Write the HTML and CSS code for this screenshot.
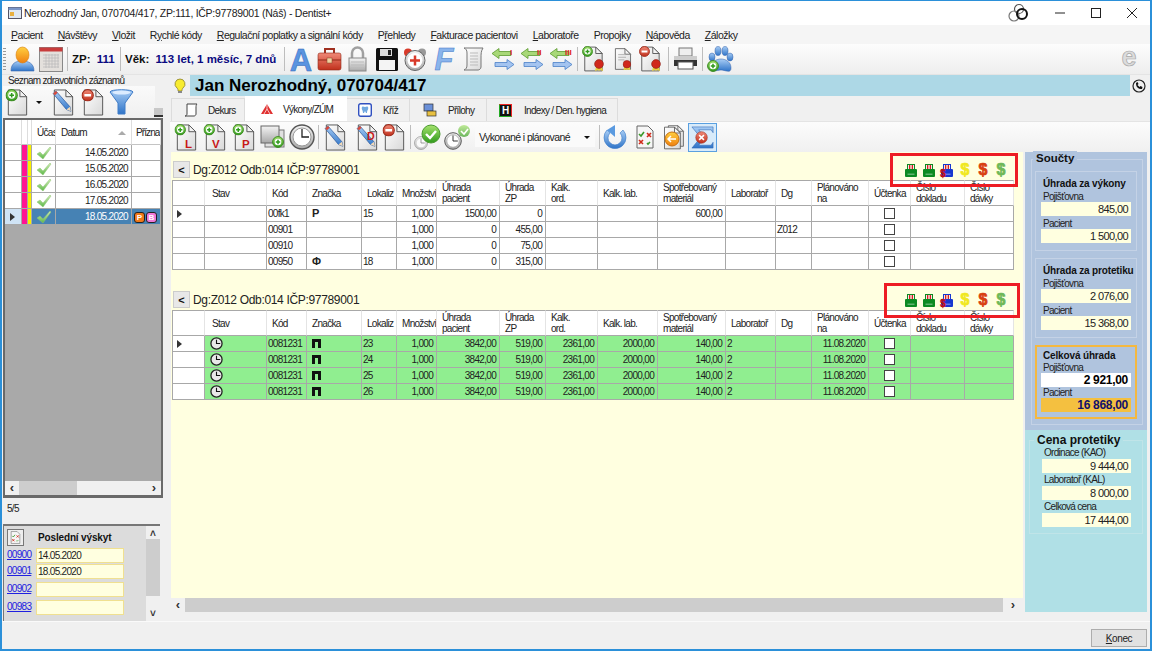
FILE: index.html
```html
<!DOCTYPE html>
<html lang="cs">
<head>
<meta charset="utf-8">
<title>Dentist+</title>
<link rel="stylesheet" href="styles.css">
</head>
<body>
<svg class="defs" aria-hidden="true">
<defs>
<linearGradient id="gPage" x1="0" y1="0" x2="1" y2="1"><stop offset="0" stop-color="#fff"/><stop offset="1" stop-color="#d8d8d8"/></linearGradient>
<linearGradient id="gGreen" x1="0" y1="0" x2="0" y2="1"><stop offset="0" stop-color="#a6e36e"/><stop offset="1" stop-color="#2f9a1c"/></linearGradient>
<linearGradient id="gTick" x1="0" y1="0" x2="0" y2="1"><stop offset="0" stop-color="#d4f0b8"/><stop offset="1" stop-color="#5cb848"/></linearGradient>
<linearGradient id="gRed" x1="0" y1="0" x2="0" y2="1"><stop offset="0" stop-color="#f08a78"/><stop offset="1" stop-color="#c0301c"/></linearGradient>
<linearGradient id="gBlue" x1="0" y1="0" x2="0" y2="1"><stop offset="0" stop-color="#a8cdf5"/><stop offset="1" stop-color="#2f74c8"/></linearGradient>
<linearGradient id="gOrange" x1="0" y1="0" x2="0" y2="1"><stop offset="0" stop-color="#ffd040"/><stop offset="1" stop-color="#f08010"/></linearGradient>
<linearGradient id="gGrey" x1="0" y1="0" x2="0" y2="1"><stop offset="0" stop-color="#f4f4f4"/><stop offset="1" stop-color="#a8a8a8"/></linearGradient>
</defs>
<symbol id="doc" viewBox="0 0 24 28"><path d="M3 1h12l7 7v19H3z" fill="url(#gPage)" stroke="#555"/><path d="M15 1v7h7z" fill="#f4f4f4" stroke="#555"/></symbol>
<symbol id="plus" viewBox="0 0 12 12"><circle cx="6" cy="6" r="5.4" fill="url(#gGreen)" stroke="#3b8a20"/><circle cx="6" cy="6" r="3.3" fill="#fff"/><path d="M3.8 6h4.4M6 3.8v4.400" stroke="#2f9a1c" stroke-width="1.500"/></symbol>
<symbol id="minus" viewBox="0 0 12 12"><circle cx="6" cy="6" r="5.4" fill="url(#gRed)" stroke="#a02a1a"/><path d="M2.8 6h6.4" stroke="#fff" stroke-width="2.200"/></symbol>
<symbol id="pencil" viewBox="0 0 24 28"><path d="M2 5l3-3 16 18 1 5-5-2z" fill="url(#gBlue)" stroke="#28579c" stroke-width=".8"/><path d="M2 5l3-3 2 2-3 3z" fill="#d84a3a"/><path d="M21 20l1 5-5-2z" fill="#f0d8b8"/></symbol>
<symbol id="seal" viewBox="0 0 10 12"><path d="M2 8l-1 4 3-1 1 1 1-1 3 1-1-4z" fill="#e8d040"/><circle cx="5" cy="5" r="4.4" fill="#d0281c" stroke="#8a1a10" stroke-width=".6"/></symbol>
<symbol id="bigclock" viewBox="0 0 26 26"><circle cx="13" cy="13" r="12" fill="url(#gGrey)" stroke="#555" stroke-width="1.400"/><circle cx="13" cy="13" r="9" fill="#fff" stroke="#999"/><path d="M13 5v8h7" fill="none" stroke="#222" stroke-width="1.300"/></symbol>
<symbol id="tick" viewBox="0 0 16 14"><path d="M1 8l3-2 3 3 7-8 1 1-8 11z" fill="url(#gTick)" stroke="#8cc070" stroke-width=".5"/></symbol>
<symbol id="tclock" viewBox="0 0 14 14"><circle cx="7" cy="7" r="6" fill="#e8e8e8" stroke="#222" stroke-width="1.400"/><path d="M7 3v4h4" fill="none" stroke="#111" stroke-width="1.200"/></symbol>
<symbol id="arrows" viewBox="0 0 24 26"><path d="M1 7l7-5v3h12v4H8v3z" fill="#a8d878" stroke="#5c9a30" stroke-width=".8"/><path d="M23 18l-7-5v3H4v4h12v3z" fill="#a4c4f0" stroke="#4a80c8" stroke-width=".8"/></symbol>
<symbol id="prn" viewBox="0 0 12 13"><rect x="2.500" y=".5" width="7" height="5" fill="#fbe8e8" stroke="currentColor"/><path d="M4 1h1.300v4H4zM6.700 1H8v4H6.700z" fill="#d82020"/><path d="M1 5h10a1 1 0 0 1 1 1v6a1 1 0 0 1-1 1H1a1 1 0 0 1-1-1V6a1 1 0 0 1 1-1z" fill="currentColor"/><rect x="2.500" y="9.500" width="7" height="1.500" fill="#fff" opacity=".35"/></symbol>
<symbol id="gridx" viewBox="0 0 20 24"><path d="M2 1h11l5 5v17H2z" fill="#f6f6f6" stroke="#666"/><path d="M4 9l2 2 3-4M15 17l-2 2-1-1" fill="none" stroke="#3a9a2a" stroke-width="1.600"/><path d="M12 8l4 4M16 8l-4 4M4 15l4 4M8 15l-4 4" stroke="#d02a1a" stroke-width="1.600"/></symbol>
</svg>

<div class="window">
  <header class="titlebar">
    <svg class="appicon" viewBox="0 0 14 12"><rect x=".5" y=".5" width="13" height="11" fill="#dfe8f2" stroke="#556"/><rect x=".5" y=".5" width="13" height="2.500" fill="#7a96c8"/><rect x="2" y="5" width="4" height="4" fill="#e8b040"/></svg>
    <span class="wintitle">Nerozhodný Jan, 070704/417, ZP:111, IČP:97789001 (Náš) - Dentist+</span>
    <svg class="rings" viewBox="0 0 22 20"><circle cx="11" cy="6" r="4.500" fill="none" stroke="#555" stroke-width="1.200"/><circle cx="6" cy="13" r="5" fill="none" stroke="#777" stroke-width="1.200"/><circle cx="14" cy="11" r="5" fill="none" stroke="#111" stroke-width="2"/></svg>
    <span class="winbtn"><svg viewBox="0 0 10 10"><path d="M0 5h10" stroke="#222"/></svg></span>
    <span class="winbtn"><svg viewBox="0 0 10 10"><rect x=".5" y=".5" width="9" height="9" fill="none" stroke="#222"/></svg></span>
    <span class="winbtn"><svg viewBox="0 0 10 10"><path d="M0 0l10 10M10 0L0 10" stroke="#222"/></svg></span>
  </header>

  <nav class="menubar">
    <span><u>P</u>acient</span><span><u>N</u>ávštěvy</span><span><u>V</u>ložit</span><span>R<u>y</u>chlé kódy</span><span><u>R</u>egulační poplatky a signální kódy</span><span>P<u>ř</u>ehledy</span><span><u>F</u>akturace pacientovi</span><span><u>L</u>aboratoře</span><span>Propo<u>j</u>ky</span><span><u>N</u>ápověda</span><span><u>Z</u>áložky</span>
  </nav>

  <div class="toolbar">
    <span class="grip"></span>
    <svg class="w25" viewBox="0 0 25 26"><path d="M1 25c0-8 5-10 11-10s12 2 12 10z" fill="url(#gBlue)" stroke="#3a6ab0" stroke-width=".6"/><ellipse cx="12.500" cy="9" rx="6.500" ry="8" fill="url(#gOrange)" stroke="#d88010" stroke-width=".6"/></svg>
    <svg class="w24" viewBox="0 0 24 25"><rect x=".5" y=".5" width="23" height="24" fill="#e4e0dc" stroke="#888"/><rect x=".5" y=".5" width="23" height="4" fill="#c83c3c"/><path d="M4 8h16M4 11h16M4 14h16M4 17h16M4 20h16M7 7v14M10 7v14M13 7v14M16 7v14M19 7v14" stroke="#bbb" stroke-width=".8"/></svg>
    <span class="sep"></span>
    <span class="info i1"><b>ZP:</b> <b class="navy">111</b></span>
    <span class="sep"></span>
    <span class="info i2"><b>Věk:</b> <b class="navy">113 let, 1 měsíc, 7 dnů</b></span>
    <span class="sep"></span>
    <svg class="w24" viewBox="0 0 24 26"><text class="glyph" x="12" y="24" text-anchor="middle" font-size="31" fill="#5a94e0" stroke="#2f68b8" stroke-width=".5">A</text></svg>
    <svg class="w25" viewBox="0 0 25 26"><path d="M8 7V3h9v4" fill="none" stroke="#a03020" stroke-width="2"/><rect x="1" y="7" width="23" height="17" rx="2" fill="url(#gRed)" stroke="#902818" stroke-width=".6"/><path d="M1 14h23" stroke="#902818"/><rect x="10" y="12" width="5" height="5" fill="#f0d0a0" stroke="#804020" stroke-width=".5"/></svg>
    <svg class="w19 m2" viewBox="0 0 19 26"><path d="M4 12V7a5.500 5.500 0 0 1 11 0v5" fill="none" stroke="#a0a0a0" stroke-width="2.500"/><rect x="1" y="12" width="17" height="13" fill="url(#gGrey)" stroke="#888"/><path d="M3 16h13M3 19h13M3 22h13" stroke="#bbb"/></svg>
    <svg class="w24 m4" viewBox="0 0 24 25"><rect x="1" y="1" width="22" height="23" rx="1.500" fill="#111"/><rect x="5" y="2" width="12" height="7" fill="#ddd"/><rect x="13" y="3" width="3" height="5" fill="#222"/><rect x="4" y="13" width="16" height="10" fill="#f4f4f4"/></svg>
    <svg class="w24" viewBox="0 0 24 26"><circle cx="5" cy="6" r="4" fill="#d83a2a"/><circle cx="19" cy="6" r="4" fill="#999"/><circle cx="12" cy="14" r="10" fill="url(#gGrey)" stroke="#666"/><circle cx="12" cy="14" r="7.500" fill="#fff"/><path d="M7 14h10M12 9v10" stroke="#d83a2a" stroke-width="2.500"/></svg>
    <svg class="w21 m3" viewBox="0 0 21 26"><text class="glyph ital" x="10" y="24" text-anchor="middle" font-size="31" fill="#8ab4ec" stroke="#3f78c8" stroke-width=".5">F</text></svg>
    <svg class="w25 m2" viewBox="0 0 25 26"><path d="M6 2h16c-2 3-2 6-2 10v9c0 2-2 3-3 3H3c2-1 3-2 3-5V7C6 4 5 3 3 2z" fill="url(#gPage)" stroke="#777"/><path d="M9 7h8M9 10h8M9 13h8M9 16h8M9 19h8" stroke="#bbb"/></svg>
    <svg class="w24 m1" viewBox="0 0 24 26"><use href="#arrows"/><text class="glyph" x="19" y="8" font-size="8" fill="#e02020">I</text></svg>
    <svg class="w24 m1" viewBox="0 0 24 26"><use href="#arrows"/><text class="glyph" x="17" y="8" font-size="8" fill="#e02020">II</text></svg>
    <svg class="w24 m1" viewBox="0 0 24 26"><use href="#arrows"/><text class="glyph" x="16" y="8" font-size="8" fill="#e02020">III</text></svg>
    <span class="sep"></span>
    <svg class="w23" viewBox="0 0 23 26"><use href="#doc" width="22" height="26"/><use href="#plus" width="11" height="11"/><use href="#seal" x="12" y="13" width="10" height="12"/></svg>
    <svg class="w20 m4" viewBox="0 0 23 26"><use href="#doc" width="22" height="26"/><path d="M6 8h9M6 11h9M6 14h7" stroke="#aaa"/><use href="#seal" x="11" y="14" width="10" height="12"/></svg>
    <svg class="w23 m2" viewBox="0 0 23 26"><use href="#doc" width="22" height="26"/><use href="#minus" width="11" height="11"/><use href="#seal" x="12" y="13" width="10" height="12"/></svg>
    <span class="sep m2"></span>
    <svg class="w25" viewBox="0 0 25 24"><rect x="6" y="1" width="13" height="8" fill="#eee" stroke="#777"/><path d="M1 9h23v10H1z" fill="#333"/><path d="M1 9h23v4H1z" fill="#ccc"/><rect x="5" y="15" width="15" height="7" fill="#fff" stroke="#555"/></svg>
    <span class="sep"></span>
    <svg class="w27" viewBox="0 0 27 26"><g fill="url(#gBlue)" stroke="#2f5ca8" stroke-width=".5"><ellipse cx="5" cy="11" rx="3" ry="4"/><ellipse cx="11" cy="5" rx="3" ry="4.500"/><ellipse cx="18" cy="5" rx="3" ry="4.500"/><ellipse cx="23" cy="11" rx="3" ry="4"/><path d="M4 22c0-6 5-9 10-9s10 3 10 9-6 2-10 2-10 3-10-2z"/></g><use href="#plus" x="0" y="14" width="12" height="12"/></svg>
    <svg class="elogo" viewBox="0 0 22 24"><text class="glyph" x="11" y="19" text-anchor="middle" font-size="27" fill="#dcdcdc" stroke="#a8a8a8" stroke-width=".7">e</text></svg>
  </div>

  <div class="content">
    <aside class="left">
      <div class="legend">Seznam zdravotních záznamů</div>
      <div class="lefttools">
        <svg class="w24" viewBox="0 0 24 28"><use href="#doc" width="24" height="28"/><use href="#plus" width="13" height="13"/></svg>
        <span class="caret"></span>
        <svg class="w24 m2" viewBox="0 0 24 28"><use href="#doc" width="24" height="28"/><use href="#pencil" width="22" height="26"/></svg>
        <svg class="w24 m2" viewBox="0 0 24 28"><use href="#doc" width="24" height="28"/><use href="#minus" width="13" height="13"/></svg>
        <svg class="w25" viewBox="0 0 25 26"><path d="M1 3c0-3 23-3 23 0l-8 11v11h-7V14z" fill="url(#gBlue)" stroke="#3f7cc8"/><ellipse cx="12.500" cy="3.500" rx="9" ry="2" fill="#dcecff"/></svg>
        <span class="overflow"></span>
      </div>
      <div class="listgrid">
        <table class="records">
          <colgroup><col class="r1"><col class="r2"><col class="r3"><col class="r4"><col class="r5"><col class="r6"></colgroup>
          <thead><tr><th></th><th></th><th></th><th>Účas</th><th class="sorted">Datum<span class="sort"></span></th><th class="flagshead">Přízna</th></tr></thead>
          <tbody>
            <tr><td></td><td class="pink"></td><td class="yel"></td><td class="mid"><svg class="tick"><use href="#tick"/></svg></td><td class="num">14.05.2020</td><td></td></tr>
            <tr><td></td><td class="pink"></td><td class="yel"></td><td class="mid"><svg class="tick"><use href="#tick"/></svg></td><td class="num">15.05.2020</td><td></td></tr>
            <tr><td></td><td class="pink"></td><td class="yel"></td><td class="mid"><svg class="tick"><use href="#tick"/></svg></td><td class="num">16.05.2020</td><td></td></tr>
            <tr><td></td><td class="pink"></td><td class="yel"></td><td class="mid"><svg class="tick"><use href="#tick"/></svg></td><td class="num">17.05.2020</td><td></td></tr>
            <tr class="sel"><td class="rowmark"><span class="tri"></span></td><td class="pink"></td><td class="yel"></td><td class="mid"><svg class="tick"><use href="#tick"/></svg></td><td class="num">18.05.2020</td><td class="flags"><i class="flag fo">P</i><i class="flag fp">B</i></td></tr>
          </tbody>
        </table>
        <div class="greyfill"></div>
        <div class="hscroll">
          <span class="arrow">‹</span><span class="thumb short"></span><span class="rest"></span><span class="arrow">›</span>
        </div>
      </div>
      <div class="count">5/5</div>
      <div class="lastseen">
        <div class="lastbody">
          <div class="lasthead">
            <span class="lasticon"><svg viewBox="0 0 20 24"><use href="#gridx"/></svg></span>
            <b>Poslední výskyt</b>
          </div>
          <div class="lastrow r-a"><a href="#">00900</a><span class="lastval">14.05.2020</span></div>
          <div class="lastrow"><a href="#">00901</a><span class="lastval">18.05.2020</span></div>
          <div class="lastrow r-b"><a href="#">00902</a><span class="lastval"></span></div>
          <div class="lastrow r-b"><a href="#">00983</a><span class="lastval"></span></div>
        </div>
        <div class="vscroll"><span>˄</span><i></i><span>˅</span></div>
      </div>
    </aside>

    <main class="main">
      <div class="namerow">
        <svg class="bulb" viewBox="0 0 12 16"><path d="M6 1a5 5 0 0 0-3 9c1 1 1 2 1 3h4c0-1 0-2 1-3a5 5 0 0 0-3-9z" fill="#f8ec30" stroke="#8a8030" stroke-width=".8"/><rect x="4" y="13" width="4" height="2" fill="#888"/></svg>
        <h1 class="patient">Jan Nerozhodný, 070704/417</h1>
        <svg class="phone" viewBox="0 0 14 14"><circle cx="7" cy="7" r="6" fill="#eee" stroke="#222" stroke-width="1.200"/><path d="M4 4c0 4 2 6 6 6l.5-2-2-1-1 1-2-2 1-1-1-2z" fill="#111"/></svg>
      </div>

      <div class="tabs">
        <span class="tab t1"><svg class="ti" viewBox="0 0 14 14"><path d="M3 1h10c-1 1-1 2-1 4v6c0 1-1 2-2 2H1c1 0 2-1 2-2z" fill="#fff" stroke="#444"/></svg>Dekurs</span>
        <span class="tab active t2"><svg class="ti" viewBox="0 0 14 12"><path d="M7 1l6 10H1z" fill="#e03030"/><path d="M4 11l3-5 3 5M7 1v5" stroke="#fff" stroke-width=".7" fill="none"/></svg>Výkony/ZÚM</span>
        <span class="tab t3"><svg class="ti" viewBox="0 0 14 14"><rect x=".7" y=".7" width="12.600" height="12.600" rx="2" fill="#fff" stroke="#3050c0" stroke-width="1.400"/><path d="M4 4c1-1 2 0 3 0s2-1 3 0c1 2-1 3-1 6H8L7 8l-1 2H5c0-3-2-4-1-6z" fill="#70a8e0"/></svg>Kříž</span>
        <span class="tab t4"><svg class="ti" viewBox="0 0 14 14"><rect x="1" y="1" width="9" height="7" fill="#6a90d8" stroke="#333" stroke-width=".7"/><rect x="4" y="8" width="9" height="5" fill="#e8c040" stroke="#333" stroke-width=".7"/></svg>Přílohy</span>
        <span class="tab t5"><span class="hicon">H</span>Indexy / Den. hygiena</span>
        <span class="tabrest"></span>
      </div>

      <div class="tools2">
        <svg class="w24" viewBox="0 0 24 28"><use href="#doc" width="24" height="28"/><use href="#plus" width="12" height="12"/><text class="glyph" x="11" y="25" font-size="12" fill="#c81818">L</text></svg>
        <svg class="w24 m2" viewBox="0 0 24 28"><use href="#doc" width="24" height="28"/><use href="#plus" width="12" height="12"/><text class="glyph" x="9" y="25" font-size="12" fill="#c81818">V</text></svg>
        <svg class="w24 m2" viewBox="0 0 24 28"><use href="#doc" width="24" height="28"/><use href="#plus" width="12" height="12"/><text class="glyph" x="10" y="25" font-size="12" fill="#c81818">P</text></svg>
        <svg class="w25 m1" viewBox="0 0 25 24"><rect x="5" y="5" width="19" height="17" fill="#e0e0e0" stroke="#777"/><rect x="1" y="1" width="18" height="17" fill="url(#gGrey)" stroke="#666"/><use href="#plus" x="12" y="11" width="12" height="12"/></svg>
        <svg class="w26 m1" viewBox="0 0 26 26"><use href="#bigclock"/></svg>
        <span class="sep"></span>
        <svg class="w24 m1" viewBox="0 0 24 28"><use href="#doc" width="24" height="28"/><use href="#pencil" width="22" height="26"/></svg>
        <svg class="w24 m5" viewBox="0 0 24 28"><use href="#doc" width="24" height="28"/><use href="#pencil" width="22" height="26"/><text class="glyph" x="12" y="17" font-size="11" fill="#c81818">D</text></svg>
        <svg class="w24" viewBox="0 0 24 28"><use href="#doc" width="24" height="28"/><use href="#minus" width="13" height="13"/></svg>
        <span class="sep m1"></span>
        <svg class="w27" viewBox="0 0 27 26"><use href="#bigclock" y="12" width="14" height="14" opacity=".6"/><circle cx="17" cy="10" r="9" fill="url(#gGreen)" stroke="#4a9a30"/><path d="M12 10l4 4 6-7" fill="none" stroke="#fff" stroke-width="2.400"/></svg>
        <svg class="w27" viewBox="0 0 27 26"><use href="#bigclock" y="8" width="18" height="18"/><circle cx="20" cy="7" r="6" fill="url(#gGreen)" opacity=".7"/><path d="M17 7l3 3 4-5" fill="none" stroke="#fff" stroke-width="1.600"/></svg>
        <span class="combo">Vykonané i plánované<span class="caret"></span></span>
        <span class="sep m1"></span>
        <svg class="w26" viewBox="0 0 26 26"><path d="M4 6a11 11 0 1 0 16 0l-3 3a7 7 0 1 1-10 0z" fill="url(#gBlue)" stroke="#3a7ac8" stroke-width=".6"/><path d="M12 1v12L4 6z" fill="#5a9ae0"/></svg>
        <svg class="w20 m3" viewBox="0 0 20 24"><use href="#gridx"/></svg>
        <svg class="w23 m4" viewBox="0 0 23 26"><use href="#doc" x="4" width="19" height="24"/><use href="#doc" y="2" width="20" height="24"/><circle cx="10" cy="15" r="7" fill="url(#gOrange)" stroke="#c87010"/><path d="M6 15h8M9 12l-3 3 3 3" fill="none" stroke="#fff" stroke-width="1.500"/></svg>
        <span class="sigma"><svg viewBox="0 0 26 26"><path d="M2 2h22v6l-2-3H9l7 8-7 8h13l2-3v6H2l9-11z" fill="url(#gBlue)" stroke="#2f68b8" stroke-width=".6"/><circle cx="12" cy="13" r="6" fill="url(#gRed)" stroke="#a02a1a" stroke-width=".6"/><path d="M9.500 10.500l5 5M14.500 10.500l-5 5" stroke="#fff" stroke-width="1.600"/></svg></span>
      </div>

      <div class="work">
        <div class="pane">
          <div class="yellow">
            <section class="group">
              <div class="grouphead">
                <button class="collapse">&lt;</button><span class="dg">Dg:Z012 Odb:014 IČP:97789001</span>
                <span class="actions">
                  <svg class="pi pg"><use href="#prn"/></svg><svg class="pi pg"><use href="#prn"/></svg><span class="pb"><svg class="pi pbl"><use href="#prn"/></svg><i>$</i></span>
                  <b class="usd y">$</b><b class="usd r">$</b><b class="usd g">$</b>
                </span>
              </div>
              <table class="grid">
                <colgroup><col class="c1"><col class="c2"><col class="c3"><col class="c4"><col class="c5"><col class="c6"><col class="c7"><col class="c8"><col class="c9"><col class="c10"><col class="c11"><col class="c12"><col class="c13"><col class="c14"><col class="c15"><col class="c16"><col class="c17"></colgroup>
                <thead><tr><th></th><th class="ind">Stav</th><th>Kód</th><th>Značka</th><th>Lokaliz</th><th>Množství</th><th>Úhrada<br>pacient</th><th>Úhrada<br>ZP</th><th>Kalk.<br>ord.</th><th>Kalk. lab.</th><th>Spotřebovaný<br>materiál</th><th>Laboratoř</th><th>Dg</th><th>Plánováno<br>na</th><th>Účtenka</th><th>Číslo<br>dokladu</th><th>Číslo<br>dávky</th></tr></thead>
                <tbody>
                  <tr><td class="mark"><span class="tri"></span></td><td></td><td>00fk1</td><td class="sign"><b>P</b></td><td>15</td><td class="num">1,000</td><td class="num">1500,00</td><td class="num">0</td><td></td><td></td><td class="num">600,00</td><td></td><td></td><td></td><td class="mid"><span class="check"></span></td><td></td><td></td></tr>
                  <tr><td class="mark"></td><td></td><td>00901</td><td></td><td></td><td class="num">1,000</td><td class="num">0</td><td class="num">455,00</td><td></td><td></td><td></td><td></td><td>Z012</td><td></td><td class="mid"><span class="check"></span></td><td></td><td></td></tr>
                  <tr><td class="mark"></td><td></td><td>00910</td><td></td><td></td><td class="num">1,000</td><td class="num">0</td><td class="num">75,00</td><td></td><td></td><td></td><td></td><td></td><td></td><td class="mid"><span class="check"></span></td><td></td><td></td></tr>
                  <tr><td class="mark"></td><td></td><td>00950</td><td class="sign"><b>Φ</b></td><td>18</td><td class="num">1,000</td><td class="num">0</td><td class="num">315,00</td><td></td><td></td><td></td><td></td><td></td><td></td><td class="mid"><span class="check"></span></td><td></td><td></td></tr>
                </tbody>
              </table>
              <div class="redbox rb1"></div>
            </section>
            <section class="group g2">
              <div class="grouphead">
                <button class="collapse">&lt;</button><span class="dg">Dg:Z012 Odb:014 IČP:97789001</span>
                <span class="actions">
                  <svg class="pi pg"><use href="#prn"/></svg><svg class="pi pg"><use href="#prn"/></svg><span class="pb"><svg class="pi pbl"><use href="#prn"/></svg><i>$</i></span>
                  <b class="usd y">$</b><b class="usd r">$</b><b class="usd g">$</b>
                </span>
              </div>
              <table class="grid planned">
                <colgroup><col class="c1"><col class="c2"><col class="c3"><col class="c4"><col class="c5"><col class="c6"><col class="c7"><col class="c8"><col class="c9"><col class="c10"><col class="c11"><col class="c12"><col class="c13"><col class="c14"><col class="c15"><col class="c16"><col class="c17"></colgroup>
                <thead><tr><th></th><th class="ind">Stav</th><th>Kód</th><th>Značka</th><th>Lokaliz</th><th>Množství</th><th>Úhrada<br>pacient</th><th>Úhrada<br>ZP</th><th>Kalk.<br>ord.</th><th>Kalk. lab.</th><th>Spotřebovaný<br>materiál</th><th>Laboratoř</th><th>Dg</th><th>Plánováno<br>na</th><th>Účtenka</th><th>Číslo<br>dokladu</th><th>Číslo<br>dávky</th></tr></thead>
                <tbody>
                  <tr><td class="mark"><span class="tri"></span></td><td class="st"><svg class="cl"><use href="#tclock"/></svg></td><td>0081231</td><td class="sign"><span class="crown"></span></td><td>23</td><td class="num">1,000</td><td class="num">3842,00</td><td class="num">519,00</td><td class="num">2361,00</td><td class="num">2000,00</td><td class="num">140,00</td><td>2</td><td></td><td class="num">11.08.2020</td><td class="mid"><span class="check"></span></td><td></td><td></td></tr>
                  <tr><td class="mark"></td><td class="st"><svg class="cl"><use href="#tclock"/></svg></td><td>0081231</td><td class="sign"><span class="crown"></span></td><td>24</td><td class="num">1,000</td><td class="num">3842,00</td><td class="num">519,00</td><td class="num">2361,00</td><td class="num">2000,00</td><td class="num">140,00</td><td>2</td><td></td><td class="num">11.08.2020</td><td class="mid"><span class="check"></span></td><td></td><td></td></tr>
                  <tr><td class="mark"></td><td class="st"><svg class="cl"><use href="#tclock"/></svg></td><td>0081231</td><td class="sign"><span class="crown"></span></td><td>25</td><td class="num">1,000</td><td class="num">3842,00</td><td class="num">519,00</td><td class="num">2361,00</td><td class="num">2000,00</td><td class="num">140,00</td><td>2</td><td></td><td class="num">11.08.2020</td><td class="mid"><span class="check"></span></td><td></td><td></td></tr>
                  <tr><td class="mark"></td><td class="st"><svg class="cl"><use href="#tclock"/></svg></td><td>0081231</td><td class="sign"><span class="crown"></span></td><td>26</td><td class="num">1,000</td><td class="num">3842,00</td><td class="num">519,00</td><td class="num">2361,00</td><td class="num">2000,00</td><td class="num">140,00</td><td>2</td><td></td><td class="num">11.08.2020</td><td class="mid"><span class="check"></span></td><td></td><td></td></tr>
                </tbody>
              </table>
              <div class="redbox rb2"></div>
            </section>
          </div>
          <div class="hscroll wide">
            <span class="arrow">‹</span><span class="thumb"></span><span class="arrow far">›</span>
          </div>
        </div>

        <aside class="side">
          <div class="sums">
            <div class="frame sumsframe">
              <div class="framelegend">Součty</div>
              <div class="box b1">
                <div class="boxtitle">Úhrada za výkony</div>
                <label>Pojišťovna</label><div class="val">845,00</div>
                <label>Pacient</label><div class="val">1 500,00</div>
              </div>
              <div class="box b2">
                <div class="boxtitle">Úhrada za protetiku</div>
                <label>Pojišťovna</label><div class="val">2 076,00</div>
                <label>Pacient</label><div class="val">15 368,00</div>
              </div>
              <div class="box total">
                <div class="boxtitle">Celková úhrada</div>
                <label>Pojišťovna</label><div class="val white">2 921,00</div>
                <label>Pacient</label><div class="val orange">16 868,00</div>
              </div>
            </div>
          </div>
          <div class="price">
            <div class="frame priceframe">
              <div class="framelegend big">Cena protetiky</div>
              <label>Ordinace (KAO)</label><div class="val">9 444,00</div>
              <label>Laboratoř (KAL)</label><div class="val">8 000,00</div>
              <label>Celková cena</label><div class="val">17 444,00</div>
            </div>
          </div>
        </aside>
      </div>
    </main>
  </div>

  <footer class="footer"><button class="konec"><u>K</u>onec</button></footer>
</div>
</body>
</html>
```

FILE: styles.css
```css
* { box-sizing: border-box; }
html, body { margin: 0; padding: 0; }
body { width: 1152px; height: 651px; overflow: hidden; font-family: "Liberation Sans", Arial, sans-serif; font-size: 10px; letter-spacing: -.7px; color: #222; }
.defs { position: absolute; width: 0; height: 0; }
svg { display: block; flex: none; overflow: visible; }
.glyph { font-family: "Liberation Sans", sans-serif; font-weight: 700; letter-spacing: 0; }
.ital { font-style: italic; }

.window { width: 1152px; height: 651px; display: flex; flex-direction: column; background: #f0f0f0; border: 1px solid #2b90d9; border-width: 1px 2px 2px 2px; }

.titlebar { height: 24px; flex: none; background: #fff; display: flex; align-items: center; padding-left: 6px; font-size: 10.500px; letter-spacing: -.28px; }
.appicon { width: 14px; height: 12px; margin-right: 2px; }
.wintitle { flex: 1; color: #222; }
.rings { width: 22px; height: 20px; margin-right: 12px; }
.winbtn { width: 36px; height: 24px; display: flex; align-items: center; justify-content: center; }
.winbtn svg { width: 10px; height: 10px; }

.menubar { height: 19px; flex: none; display: flex; gap: 15px; align-items: center; padding-left: 9px; background: #f5f5f5; font-size: 10.500px; letter-spacing: -.48px; }
.menubar u { text-underline-offset: 1px; }

.toolbar { height: 31px; flex: none; display: flex; align-items: center; gap: 4px; padding-left: 1px; background: linear-gradient(#fdfdfd, #eeeeee); border-bottom: 1px solid #e4e4e4; }
.grip { width: 3px; height: 22px; background: repeating-linear-gradient(#999 0 1px, transparent 1px 3px); }
.w19 { width: 19px; height: 26px; }
.w20 { width: 20px; height: 24px; }
.w21 { width: 21px; height: 26px; }
.w23 { width: 23px; height: 26px; }
.w24 { width: 24px; height: 27px; }
.w25 { width: 25px; height: 26px; }
.w26 { width: 26px; height: 26px; }
.w27 { width: 27px; height: 26px; }
.m1 { margin-left: 1px; }
.m2 { margin-left: 2px; }
.m3 { margin-left: 3px; }
.m4 { margin-left: 4px; }
.m5 { margin-left: 5px; }
.sep { width: 1px; height: 24px; flex: none; background: #bdbdbd; }
.info { font-family: "Liberation Sans", sans-serif; font-size: 11.500px; letter-spacing: 0; color: #111; white-space: nowrap; }
.i1 { width: 44px; }
.i2 { width: 155px; }
.info b + b { margin-left: 3px; }
.navy { color: #0a0a80; }
.elogo { width: 22px; height: 24px; margin-left: auto; margin-right: 10px; }

.content { flex: 1; min-height: 0; display: flex; border-bottom: 1px solid #fafafa; }

.left { width: 163px; margin-left: 1px; flex: none; display: flex; flex-direction: column; }
.legend { height: 11px; line-height: 11px; padding-left: 5px; }
.lefttools { width: 152px; height: 32px; flex: none; display: flex; align-items: center; gap: 4px; padding-left: 2px; position: relative; background: linear-gradient(#fafafa, #f0f0f0); }
.caret { width: 0; height: 0; flex: none; border: 3px solid transparent; border-top: 3px solid #111; border-bottom: 0; margin: 0 3px; }
.overflow { position: absolute; right: -8px; bottom: 1px; width: 9px; height: 9px; background: #c8c8c8; border-bottom: 2px solid #333; }
.listgrid { width: 160px; height: 380px; flex: none; display: flex; flex-direction: column; border: 2px solid #696969; border-width: 2px 2px 3px 2px; background: #a9a9a9; }
.records { width: 100%; table-layout: fixed; border-collapse: separate; border-spacing: 0; background: #fff; }
.r1 { width: 17px; } .r2 { width: 6px; } .r3 { width: 4px; } .r4 { width: 24px; } .r5 { width: 76px; } .r6 { width: auto; }
.records th { height: 25px; font-weight: 400; text-align: left; padding: 0 0 0 5px; border-right: 1px solid #ddd; white-space: nowrap; overflow: hidden; }
.records .flagshead { padding-left: 4px; letter-spacing: -.9px; }
.records td { height: 16px; padding: 0; border: 1px solid #a8a8a8; border-width: 0 1px 1px 0; overflow: hidden; }
.records .sorted { position: relative; }
.records thead th { border-bottom: 1px solid #c4c4c4; }
.sort { position: absolute; right: 5px; top: 11px; border: 4px solid transparent; border-top: 0; border-bottom: 4px solid #aaa; }
.pink { background: #ff1493; }
.yel { background: #f8f000; }
.mid { text-align: center; }
.tick { width: 16px; height: 14px; margin: auto; }
td.num { text-align: right; padding-right: 2px; }
.records td.num { padding-right: 3px; }
.sel td { background: #4682b4; color: #fff; }
.sel .pink { background: #ff1493; }
.sel .yel { background: #f8f000; }
.sel .rowmark { background: #cfe3f5; }
.rowmark { padding-left: 5px !important; }
.tri { display: block; width: 0; height: 0; border: 4px solid transparent; border-left: 5px solid #333; border-right: 0; }
.flags { white-space: nowrap; padding-left: 2px !important; }
.flag { display: inline-block; width: 11px; height: 11px; margin-right: 1px; border: 1px solid #222; border-radius: 3px; font: 700 8px/9px "Liberation Sans", sans-serif; letter-spacing: 0; text-align: center; color: #fff; vertical-align: top; margin-top: 2px; }
.fo { background: #f07818; }
.fp { background: #f078d8; }
.greyfill { flex: 1; }
.hscroll { height: 14px; flex: none; display: flex; align-items: center; background: #f0f0f0; }
.arrow { width: 14px; text-align: center; font: 700 13px/12px "Liberation Sans", sans-serif; letter-spacing: 0; color: #333; flex: none; }
.far { width: 20px; }
.thumb { flex: 1; height: 100%; background: #cdcdcd; }
.thumb.short { flex: none; width: 58px; }
.rest { flex: 1; }
.count { height: 26px; flex: none; padding: 3px 0 0 4px; line-height: 16px; }
.lastseen { width: 157px; height: 97px; flex: none; display: flex; background: #dcdcdc; border-top: 2px solid #777; border-left: 1px solid #777; }
.lastbody { flex: 1; min-width: 0; padding: 2px 0 0 3px; }
.lasthead { display: flex; align-items: center; height: 18px; margin-bottom: 2px; }
.lasthead b { margin-left: 14px; font: 700 10px "Liberation Sans", sans-serif; letter-spacing: -.15px; color: #111; }
.lasticon { width: 17px; height: 17px; padding: 1px; display: block; background: #eee; border: 1px solid #777; flex: none; }
.lasticon svg { width: 13px; height: 13px; }
.lastrow { display: flex; align-items: center; height: 15px; margin-bottom: 1px; }
.lastrow a { width: 29px; color: #2020e0; flex: none; margin-top: -2px; }
.lastval { width: 88px; height: 15px; background: #ffffe0; border: 1px solid #f0e090; padding-left: 1px; line-height: 13px; }
.r-b { margin-top: 3px; margin-bottom: 0; }
.vscroll { width: 14px; flex: none; display: flex; flex-direction: column; background: #f0f0f0; text-align: center; font: 700 10px/15px "Liberation Sans", sans-serif; letter-spacing: 0; color: #333; }
.vscroll i { flex: 1; background: #cdcdcd; margin-bottom: 10px; margin-top: -2px; }

.main { flex: 1; min-width: 0; margin-left: 4px; display: flex; flex-direction: column; }
.namerow { height: 21px; flex: none; display: flex; align-items: center; }
.bulb { width: 12px; height: 16px; margin: 0 4px 0 4px; }
.patient { margin: 0; width: 940px; height: 21px; padding-left: 5px; background: #add8e6; font: 700 17px/21px "Liberation Sans", sans-serif; letter-spacing: 0; color: #000; }
.phone { width: 14px; height: 14px; margin-left: 2px; }
.tabs { height: 24px; flex: none; display: flex; margin-top: 1px; }
.tab { height: 23px; display: flex; align-items: center; gap: 10px; padding-left: 12px; margin-top: 1px; background: #f0f0f0; border: 1px solid #dcdcdc; border-bottom: 0; border-left: 0; white-space: nowrap; }
.tab.active { background: #fff; height: 25px; margin-top: -1px; border-color: #fff; gap: 9px; padding-left: 15px; }
.t1 { width: 74px; margin-left: 1px; border-left: 1px solid #dcdcdc; }
.t2 { width: 102px; }
.t3 { width: 63px; gap: 11px; padding-left: 11px; }
.t4 { width: 77px; gap: 11px; padding-left: 13px; }
.t5 { width: 131px; gap: 12px; }
.tabrest { flex: 1; }
.ti { width: 14px; height: 14px; }
.hicon { width: 13px; height: 13px; flex: none; background: #111; border: 1px solid #2a2; border-color: #e22 #e22 #2a2 #2a2; color: #fff; font: 700 10px/11px "Liberation Sans", sans-serif; letter-spacing: 0; text-align: center; }
.tools2 { height: 31px; flex: none; display: flex; align-items: center; gap: 3px; padding-left: 4px; background: linear-gradient(#fcfcfc, #f0f0f0); border-top: 1px solid #e4e4e4; }
.combo { width: 120px; height: 19px; margin-left: 1px; display: flex; align-items: center; justify-content: space-between; padding: 0 2px 0 4px; background: #fafafa; font-size: 10.500px; letter-spacing: -.6px; white-space: nowrap; }
.sigma { width: 29px; height: 29px; padding: 1px; display: block; background: #d8ebfa; border: 1px solid #5aa0e0; }
.sigma svg { width: 25px; height: 25px; }

.work { height: 460px; flex: none; display: flex; }
.pane { width: 852px; flex: none; margin-left: 1px; display: flex; flex-direction: column; }
.yellow { flex: 1; min-height: 0; background: #ffffe0; padding-left: 1px; }
.group { position: relative; width: 849px; }
.g2 { margin-top: 12px; }
.grouphead { height: 28px; display: flex; align-items: flex-end; padding: 0 0 2px 1px; position: relative; }
.collapse { width: 17px; height: 17px; padding: 0; margin-right: 3px; background: #e8e8e8; border: 1px solid #ccc; font: 700 11px/14px "Liberation Sans", sans-serif; letter-spacing: 0; color: #111; }
.dg { font: 12px/16px "Liberation Sans", sans-serif; letter-spacing: -.33px; color: #222; }
.actions { position: absolute; right: 14px; top: 11px; display: flex; gap: 6px; align-items: center; }
.pi { width: 12px; height: 13px; }
.pg { color: #0c8a22; }
.pbl { color: #1838d0; }
.pb { position: relative; display: block; }
.pb i { position: absolute; left: -1px; bottom: -2px; font: 700 10px/10px "Liberation Sans", sans-serif; letter-spacing: 0; color: #c01010; font-style: normal; -webkit-text-stroke: .3px #c01010; }
.usd { width: 12px; text-align: center; font: 700 16px/14px "Liberation Sans", sans-serif; letter-spacing: 0; -webkit-text-stroke: .7px currentColor; }
.y { color: #f0e820; }
.r { color: #d84010; }
.g { color: #70b858; }

.grid { width: 841px; table-layout: fixed; border-collapse: separate; border-spacing: 0; background: #fff; border-left: 1px solid #a8a8a8; }
.c1 { width: 32px; } .c2 { width: 62px; } .c3 { width: 40px; } .c4 { width: 55px; } .c5 { width: 35px; } .c6 { width: 40px; } .c7 { width: 63px; } .c8 { width: 46px; } .c9 { width: 52px; } .c10 { width: 60px; } .c11 { width: 68px; } .c12 { width: 50px; } .c13 { width: 36px; } .c14 { width: 57px; } .c15 { width: 42px; } .c16 { width: 54px; } .c17 { width: 49px; }
.grid th { height: 26px; padding: 0 0 0 5px; font-weight: 400; line-height: 11px; text-align: left; border: 1px solid #a8a8a8; border-width: 1px 1px 1px 0; border-right-color: #e4e4e4; overflow: hidden; white-space: nowrap; }
.grid .ind { padding-left: 7px; }
.grid td { height: 16px; padding: 0 1px; border: 1px solid #a8a8a8; border-width: 0 1px 1px 0; white-space: nowrap; overflow: hidden; line-height: 14px; }
.grid td.num { padding-right: 3px; }
.mark { padding-left: 4px !important; background: #fff; }
.sign { padding-left: 5px !important; }
.sign b { font: 700 11px/14px "Liberation Sans", sans-serif; letter-spacing: 0; }
.check { display: block; width: 11px; height: 11px; margin: auto; background: #fff; border: 1px solid #444; }
.planned tbody td { background: #90ee90; }
.planned tbody td.mark { background: #fff; }
.st { padding-left: 5px !important; }
.cl { width: 13px; height: 13px; }
.crown { display: block; width: 9px; height: 9px; background: linear-gradient(#111 0 3px, transparent 3px), linear-gradient(90deg, #111 0 3px, #90ee90 3px 6px, #111 6px); }
.redbox { position: absolute; border: 3px solid #ed1c24; pointer-events: none; }
.rb1 { left: 718px; top: 1px; width: 128px; height: 34px; }
.rb2 { left: 712px; top: 1px; width: 136px; height: 35px; }

.wide { height: 14px; }
.side { width: 122px; flex: none; display: flex; flex-direction: column; margin-left: 2px; }
.sums { height: 278px; flex: none; background: #b0c4de; padding: 7px 4px 4px 6px; }
.price { flex: 1; background: #b0e0e6; padding: 10px 4px 0 4px; }
.frame { border: 1px solid #c4d2e6; position: relative; }
.sumsframe { height: 266px; padding: 11px 5px 0 3px; }
.priceframe { height: 94px; padding: 6px 11px 0 12px; border-color: #c0e4e8; }
.framelegend { position: absolute; left: 1px; top: -9px; padding: 0 3px; background: #b0c4de; font: 700 11.500px/14px "Liberation Sans", sans-serif; letter-spacing: 0; color: #111; }
.big { left: 4px; top: -8px; background: #b0e0e6; font-size: 12px; }
.box { border: 1px solid #c4d2e6; padding: 5px 5px 0; height: 80px; margin-bottom: 7px; }
.total { height: 74px; border: 2px solid #f4b840; padding: 2px 4px 0; margin-bottom: 0; }
.boxtitle { padding-left: 2px; font: 700 10px/13px "Liberation Sans", sans-serif; letter-spacing: -.15px; color: #111; white-space: nowrap; }
.frame label { display: block; line-height: 12px; color: #222; padding-left: 2px; }
.box .boxtitle + label { margin-top: 1px; }
.val { height: 14px; line-height: 14px; margin-top: -1px; padding-right: 3px; text-align: right; background: #ffffe0; font-size: 11px; letter-spacing: -.6px; color: #222; }
.box .val + label { margin-top: 2px; }
.total .boxtitle + label, .total .val + label { margin-top: 0; }
.priceframe .val { margin-top: 0; }
.priceframe .val + label { margin-top: 1px; }
.total .val { font: 700 12px/14px "Liberation Sans", sans-serif; letter-spacing: -.3px; }
.white { background: #fff; color: #000; }
.orange { background: #f4c040; color: #10106a; }

.footer { height: 27px; flex: none; display: flex; align-items: flex-end; justify-content: flex-end; padding: 0 3px 2px 0; }
.konec { width: 56px; height: 18px; padding: 0; background: #e1e1e1; border: 1px solid #adadad; font: 10px "Liberation Sans", sans-serif; letter-spacing: -.4px; color: #222; }
```
